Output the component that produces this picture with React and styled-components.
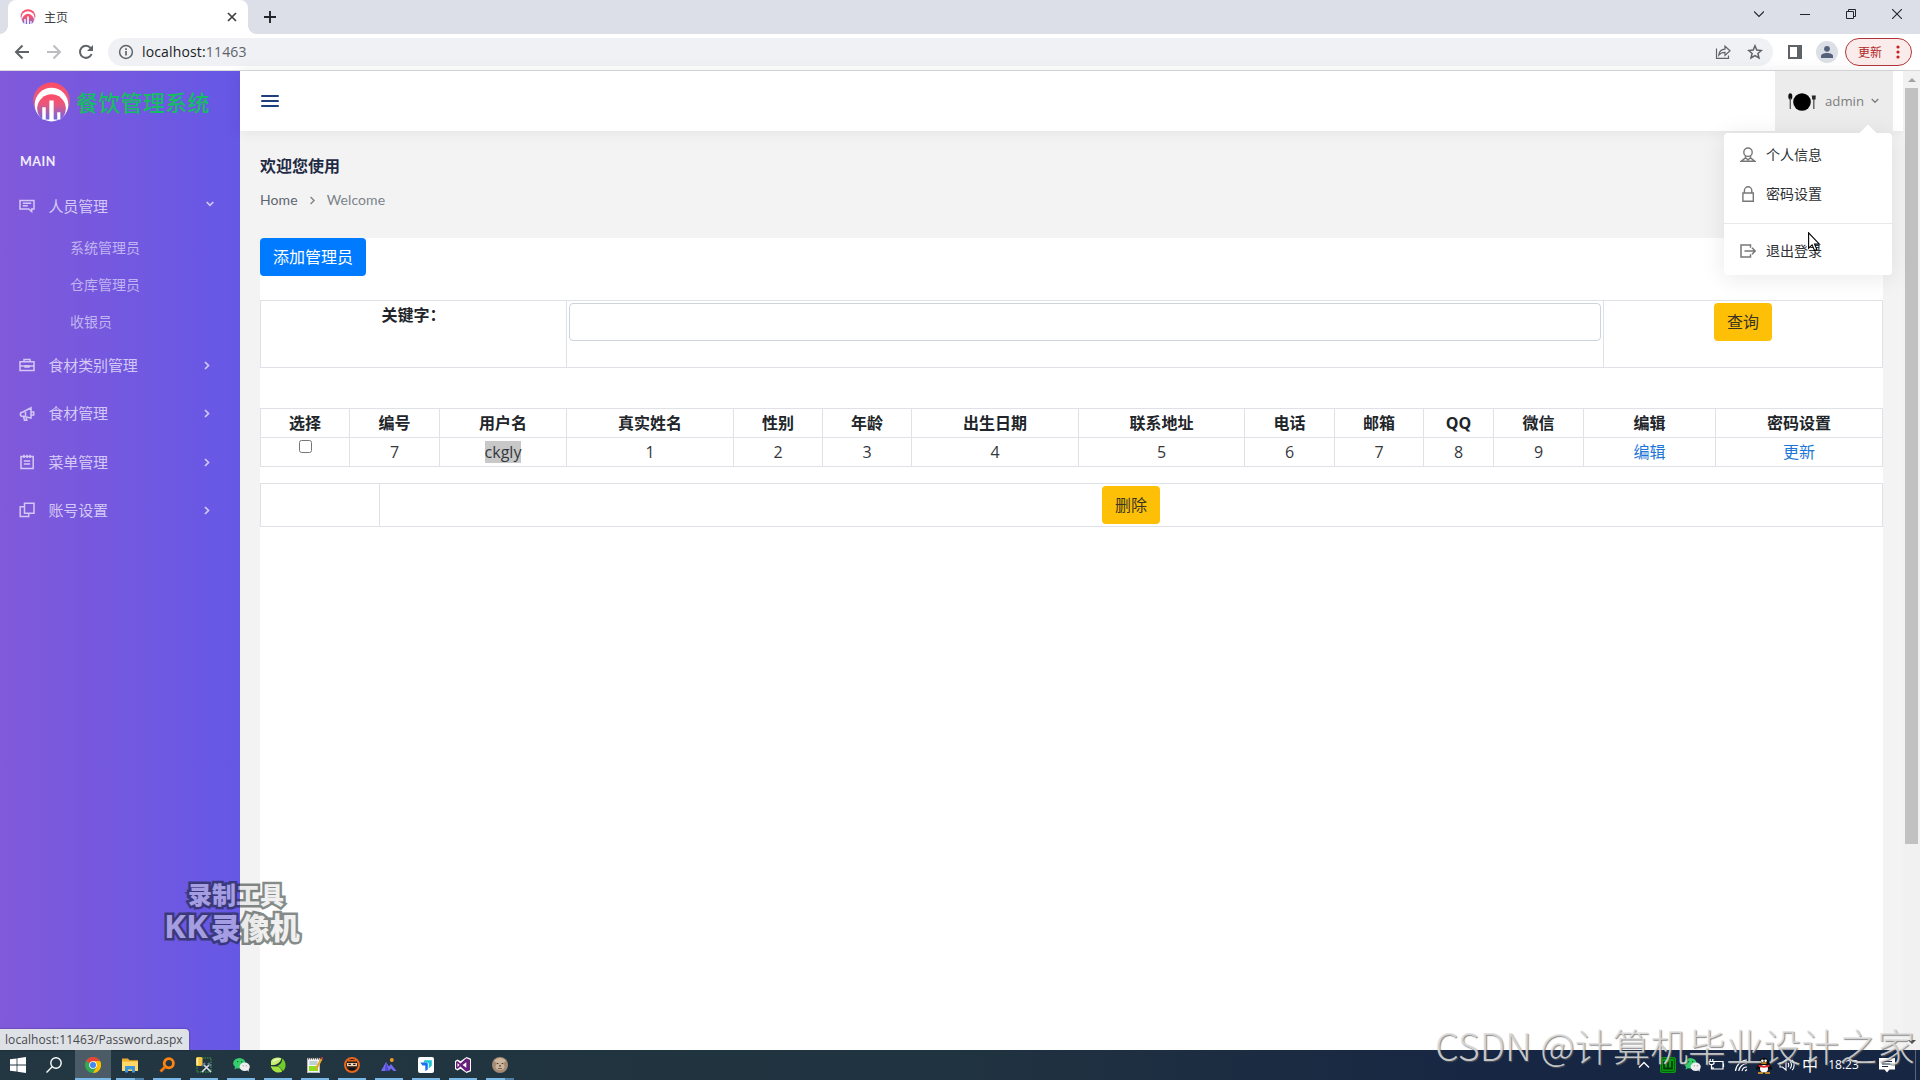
import React from 'react';
import styled, { createGlobalStyle, css } from 'styled-components';

const uiFont = '"Open Sans", "Noto Sans CJK SC", sans-serif';
const pageFont = 'Lato, "Noto Sans CJK SC", sans-serif';

const GlobalStyle = createGlobalStyle`
    * {
        box-sizing: border-box;
    }
    body {
        margin: 0;
        overflow: hidden;
        font-family: ${uiFont};
        color: #212529;
    }
    svg {
        display: block;
        flex: none;
    }
`;

const Screen = styled.div`
    position: relative;
    display: flex;
    flex-direction: column;
    width: 1920px;
    height: 1080px;
    overflow: hidden;
    background: #fff;
`;

/* ---------- browser window ---------- */

const TabStrip = styled.div`
    display: flex;
    height: 34px;
    padding-left: 8px;
    background: #dcdfe7;
`;
const Tab = styled.div`
    position: relative;
    display: flex;
    align-items: center;
    width: 240px;
    padding: 0 10px 0 12px;
    border-radius: 8px 8px 0 0;
    background: #fff;
    font-size: 12px;
    color: #3c4043;
    &::before,
    &::after {
        content: '';
        position: absolute;
        bottom: 0;
        width: 8px;
        height: 8px;
    }
    &::before {
        left: -8px;
        background: radial-gradient(circle at 0 0, transparent 7.5px, #fff 8px);
    }
    &::after {
        right: -8px;
        background: radial-gradient(circle at 100% 0, transparent 7.5px, #fff 8px);
    }
`;
const TabTitle = styled.span`
    flex: 1;
    margin: 0 0 1px 8px;
`;
const NewTab = styled.div`
    display: flex;
    align-items: center;
    margin-left: 16px;
`;
const WindowButtons = styled.div`
    display: flex;
    margin-left: auto;
`;
const WindowButton = styled.div`
    display: flex;
    justify-content: center;
    width: 46px;
    padding-top: 9px;
`;
const Toolbar = styled.div`
    display: flex;
    align-items: center;
    height: 37px;
    padding: 0 8px 1px 14px;
    border-bottom: 1px solid #d9dadd;
    background: #fff;
    color: #5f6368;
`;
const NavButtons = styled.div`
    display: flex;
    gap: 16px;
    margin-right: 14px;
`;
const Omnibox = styled.div`
    display: flex;
    align-items: center;
    width: 1665px;
    height: 28px;
    padding: 0 10px 0 10px;
    border-radius: 14px;
    background: #eff1f5;
`;
const Address = styled.span`
    flex: 1;
    margin-left: 8px;
    font-size: 14px;
    letter-spacing: 0.15px;
    color: #5f6368;
    b {
        font-weight: normal;
        color: #202124;
    }
`;
const OmniActions = styled.div`
    display: flex;
    gap: 16px;
`;
const PanelIcon = styled.div`
    width: 14px;
    height: 14px;
    margin: 0 14px 0 15px;
    border: 2px solid #5f6368;
    border-right-width: 5px;
`;
const Avatar = styled.div`
    display: flex;
    justify-content: center;
    align-items: center;
    width: 22px;
    height: 22px;
    margin-right: 7px;
    border-radius: 50%;
    background: #dcdfe6;
`;
const UpdatePill = styled.div`
    display: flex;
    align-items: center;
    justify-content: space-between;
    width: 67px;
    height: 28px;
    padding: 0 11px 0 12px;
    border: 1px solid #b3353b;
    border-radius: 14px;
    background: #fbecec;
    font-size: 12px;
    color: #b3261e;
`;

const Viewport = styled.div`
    position: relative;
    display: flex;
    height: 979px;
`;
const ScrollTrack = styled.div`
    display: flex;
    flex-direction: column;
    align-items: center;
    width: 17px;
    background: #f1f1f1;
`;
const ScrollArrow = styled.div`
    display: flex;
    align-items: center;
    justify-content: center;
    height: 17px;
    color: ${(p) => (p.$active ? '#505050' : '#a3a3a3')};
`;
const ScrollThumb = styled.div`
    width: 13px;
    height: 756px;
    margin-bottom: auto;
    background: #c1c1c1;
`;
const StatusBubble = styled.div`
    position: absolute;
    left: 0;
    bottom: 0;
    width: 189px;
    height: 21px;
    padding-left: 5px;
    border-top-right-radius: 4px;
    background: #dee1e6;
    box-shadow: 0 0 2px rgba(0, 0, 0, 0.45);
    font-size: 12px;
    line-height: 21px;
    letter-spacing: 0.08px;
    color: #47494d;
    white-space: nowrap;
`;

/* ---------- sidebar ---------- */

const Sidebar = styled.aside`
    width: 240px;
    background: linear-gradient(to right, #8159d9, #6558e6);
    font-family: ${pageFont};
`;
const Brand = styled.div`
    display: flex;
    align-items: center;
    height: 60px;
    padding: 2px 0 0 33px;
`;
const BrandName = styled.span`
    margin: 2px 0 0 6px;
    font-size: 22px;
    font-weight: 500;
    line-height: 30px;
    letter-spacing: 0.3px;
    color: #14bd63;
`;
const MenuTitle = styled.div`
    height: 51px;
    padding: 22px 0 0 20px;
    font-size: 12.5px;
    font-weight: bold;
    line-height: 18px;
    letter-spacing: 0.5px;
    color: #f1ecfc;
`;
const MenuItem = styled.div`
    display: flex;
    align-items: center;
    height: 48.3px;
    padding: 0 30px 0 19px;
    color: #d3c8f5;
    font-size: 15px;
`;
const MenuLabel = styled.span`
    flex: 1;
    margin-left: 13.5px;
    padding-bottom: 2px;
    letter-spacing: -0.15px;
`;
const SubItem = styled.div`
    height: 37px;
    padding-left: 70px;
    font-size: 14px;
    line-height: 35px;
    color: #c1b4f1;
`;

/* ---------- page ---------- */

const Main = styled.main`
    display: flex;
    flex-direction: column;
    flex: 1;
    background: #f3f3f3;
`;
const Topbar = styled.header`
    display: flex;
    justify-content: space-between;
    height: 60px;
    padding: 0 10px 0 21px;
    background: #fff;
    box-shadow: 0 0 14px rgba(0, 0, 0, 0.08);
`;
const Burger = styled.div`
    display: flex;
    flex-direction: column;
    justify-content: space-between;
    width: 18px;
    height: 12px;
    margin-top: 24px;
    i {
        height: 2px;
        border-radius: 1px;
        background: #1d3f80;
    }
`;
const UserButton = styled.div`
    display: flex;
    align-items: center;
    width: 118px;
    height: 61px;
    padding: 0 0 1px 13px;
    background: #ececec;
    color: #7d7d7d;
`;
const UserName = styled.span`
    margin: 0 7px 0 9px;
    padding-bottom: 1px;
    font-family: "Open Sans", sans-serif;
    font-size: 13.2px;
`;
const PageHead = styled.div`
    height: 107px;
    padding: 23px 0 0 20px;
    font-family: ${pageFont};
`;
const PageTitle = styled.h4`
    margin: 0;
    font-size: 16px;
    line-height: 23px;
    color: #1f2a44;
`;
const Breadcrumb = styled.div`
    display: flex;
    align-items: center;
    gap: 12px;
    margin-top: 13px;
    font-size: 14px;
    line-height: 20px;
    letter-spacing: 0.1px;
    color: #7b838b;
    span:first-child {
        color: #5d6570;
    }
`;
const Content = styled.section`
    flex: 1;
    width: 1623px;
    margin-left: 20px;
    background: #fff;
    font-size: 16px;
`;
const Button = styled.button`
    display: block;
    height: 38px;
    padding: 0 13px;
    border: 0;
    border-radius: 4px;
    font-family: ${uiFont};
    font-size: 16px;
    line-height: 38px;
    ${(p) =>
        p.$primary
            ? css`
                  background: #007bff;
                  color: #fff;
              `
            : css`
                  margin: 0 auto;
                  background: #fdc007;
                  color: #3a3424;
              `}
`;
const Table = styled.table`
    width: 1623px;
    margin-top: ${(p) => p.$top}px;
    table-layout: fixed;
    border-collapse: collapse;
    th,
    td {
        height: ${(p) => p.$row}px;
        padding: 0;
        border: 1px solid #dee2e6;
        text-align: center;
        line-height: 24px;
        vertical-align: ${(p) => (p.$alignTop ? 'top' : 'middle')};
    }
    td {
        color: #34383c;
    }
    a {
        color: #1c76d8;
    }
`;
const SearchLabel = styled.div`
    padding-top: 2px;
    font-weight: bold;
    color: #212529;
`;
const CellPad = styled.div`
    padding: 2px;
`;
const Input = styled.input`
    display: block;
    width: 100%;
    height: 38px;
    border: 1px solid #ced4da;
    border-radius: 4px;
`;
const Checkbox = styled.input`
    display: block;
    width: 13px;
    height: 13px;
    margin: 0 auto 12px;
`;
const Selected = styled.span`
    background: #c8c8c8;
`;

const Dropdown = styled.div`
    position: absolute;
    top: 62px;
    left: 1724px;
    width: 168px;
    height: 142px;
    padding-top: 2px;
    border-radius: 4px;
    background: #fff;
    box-shadow: 0 3px 24px rgba(0, 0, 0, 0.09);
    &::before {
        content: '';
        position: absolute;
        top: -6px;
        left: 138px;
        width: 12px;
        height: 12px;
        background: #fff;
        transform: rotate(45deg);
    }
`;
const DropdownItem = styled.div`
    position: relative;
    display: flex;
    align-items: center;
    gap: 10px;
    height: 39px;
    padding-left: 16px;
    font-size: 14px;
    color: #2c2f33;
    svg {
        color: #777;
    }
`;
const DropdownLabel = styled.span`
    padding-bottom: 2px;
`;
const Divider = styled.div`
    height: 1px;
    margin: 10px 0 7px;
    background: #e6e8ec;
`;
const Pointer = styled.div`
    position: absolute;
    left: 1808px;
    top: 232px;
`;

/* ---------- taskbar ---------- */

const Taskbar = styled.div`
    display: flex;
    height: 30px;
    background: linear-gradient(to right, #223741, #203340 50%, #172643 78%, #172643);
`;
const TaskSlot = styled.div`
    display: flex;
    align-items: center;
    justify-content: center;
    width: 36px;
`;
const TaskApp = styled(TaskSlot)`
    position: relative;
    margin-right: 1px;
    margin-left: ${(p) => (p.$active ? '3px' : 0)};
    background: ${(p) => (p.$active ? '#4c5c66' : 'none')};
    &::after {
        content: '';
        position: absolute;
        bottom: 0;
        left: ${(p) => (p.$active ? 0 : 4)}px;
        right: ${(p) => (p.$active ? 0 : 4)}px;
        height: 2px;
        background: ${(p) => (p.$stacked ? 'linear-gradient(to right, #7ab8e8 19px, #4f81a8 19px)' : '#7ab8e8')};
    }
`;
const Tray = styled.div`
    display: flex;
    align-items: center;
    margin-left: auto;
    margin-right: 4px;
    padding-right: 7px;
    border-right: 1px solid #5a6680;
    color: #fff;
`;
const TraySlot = styled.div`
    display: flex;
    align-items: center;
    justify-content: center;
    width: ${(p) => p.$w || 24}px;
    font-size: ${(p) => p.$size || 12}px;
    line-height: 20px;
    white-space: nowrap;
`;

/* ---------- watermarks ---------- */

const RecorderMark = styled.div`
    position: absolute;
    left: 162px;
    top: 878px;
    width: 148px;
    opacity: 0.5;
    font-family: "Noto Sans CJK SC", sans-serif;
    font-weight: 900;
    color: #e2e2e2;
    text-align: center;
    white-space: nowrap;
    -webkit-text-stroke: 5px #0c1a14;
    paint-order: stroke fill;
`;
const RecorderSmall = styled.div`
    font-size: 24px;
    line-height: 32px;
`;
const RecorderBig = styled.div`
    display: flex;
    align-items: center;
    height: 32px;
    margin-left: 2px;
    font-size: 30px;
    line-height: 32px;
    letter-spacing: -0.6px;
`;
const RecorderLatin = styled.span`
    margin-right: 3px;
    font-family: "Open Sans", sans-serif;
    font-size: 33px;
    font-weight: 700;
    letter-spacing: 0;
`;
const CornerMark = styled.div`
    position: absolute;
    left: 1435px;
    top: 1017px;
    font-family: "Noto Sans CJK SC", sans-serif;
    font-size: 37.8px;
    font-weight: 300;
    line-height: 56px;
    color: rgba(222, 222, 222, 0.85);
    text-shadow: 1px 1px 1px rgba(100, 100, 100, 0.75);
    white-space: nowrap;
`;

/* ---------- icons ---------- */

const Icon = ({ size = 16, w, h, box = '0 0 16 16', sw = 1.5, children }) => (
    <svg
        width={w || size}
        height={h || size}
        viewBox={box}
        fill="none"
        stroke="currentColor"
        strokeWidth={sw}
    >
        {children}
    </svg>
);

const Logo = ({ size, h = size, id }) => (
    <svg width={size} height={h} viewBox="0 0 36 39">
        <defs>
            <linearGradient id={id} x1="0" y1="0" x2="0" y2="1">
                <stop offset="0" stopColor="#ff4d64" />
                <stop offset="0.4" stopColor="#e9577c" />
                <stop offset="1" stopColor="#6e67e8" />
            </linearGradient>
        </defs>
        <circle cx="18" cy="18.5" r="18" fill={`url(#${id})`} />
        <circle cx="18" cy="22" r="16.4" fill="#fff" />
        <path d="M6.5 34A14 14 0 1 1 29.5 34L26 36.5H10Z" fill={`url(#${id})`} />
        <path d="M9 24.5h3.4v12H9ZM15.9 18h4.2v20H15.9ZM23.6 29.5h3v7h-3Z" fill="#fff" />
    </svg>
);

const PlateIcon = () => (
    <svg width="28" height="20" viewBox="0 0 28 20">
        <circle cx="14" cy="11" r="8.8" fill="#000" />
        <ellipse cx="2.3" cy="5.5" rx="2" ry="3.2" fill="#111" />
        <path d="M2.3 7v11M25.8 8v10" stroke="#555" strokeWidth="1.3" />
        <path d="M23.8 5h4M24.7 5v3h2.3V5" stroke="#222" strokeWidth="1.2" fill="#333" />
    </svg>
);

const ChevronRight = () => (
    <Icon w={6} h={9} box="0 0 6 9" sw={1.7}>
        <path d="M1 1l3.5 3.5L1 8" />
    </Icon>
);
const ChevronDown = ({ sw = 1.7 }) => (
    <Icon w={8} h={6} box="0 0 8 6" sw={sw}>
        <path d="M0.7 1L4 4.3 7.3 1" />
    </Icon>
);
const MenuArrowOpen = styled.div`
    margin: 0 -4px 4px 0;
`;

const menuIcons = {
    message: <path d="M1 2.4h14v8.6h-2.3v2.6L9.8 11H1ZM3.8 5.2h8.4M3.8 7.8h5" />,
    briefcase: <path d="M1 4.8h14v8.7H1ZM5 4.8V2.5h6v2.3M1 9h5M10 9h5M6 8.7h4v1.2H6Z" />,
    horn: <path d="M4 6L12 1.8V12L4 10.3C.5 11 .5 6 4 6ZM12 6h2.7v3H12M4.5 10.5l1 3.7h2.3L7 11M6.5 6v4" />,
    notepad: <path d="M2 2.4h12.2v12H2ZM5 .8v3.2M8 .8v3.2M11 .8v3.2M4.8 7h6.4M4.8 10h6.4" />,
    copy: <path d="M5.5 1.2H15V11.3H5.5ZM5.5 4.8H1.2v9.6h8.5v-3" />,
};

const WeChat = () => (
    <svg width="17" height="16" viewBox="0 0 17 16">
        <path d="M2 10l-.5 2.4L4.6 11Z" fill="#35cf6f" />
        <ellipse cx="6.4" cy="6.2" rx="6.2" ry="5.3" fill="#35cf6f" />
        <ellipse cx="11.7" cy="9.8" rx="5.1" ry="4.3" fill="#eee" />
        <path d="M14 13l1.8 1.8-.2-3Z" fill="#eee" />
        <path d="M4 4.6h1.2M8 4.6h1.2" stroke="#14632f" strokeWidth="1.2" />
        <path d="M9.8 8.8h1M12.8 8.8h1" stroke="#888" />
    </svg>
);

const taskIcons = {
    chrome: (
        <>
            <circle cx="8" cy="8" r="8" fill="#34a853" />
            <path d="M8 8L1.1 4A8 8 0 0 1 15 4Z" fill="#ea4335" />
            <path d="M8 8V4h7A8 8 0 0 1 8 16l3.5-6Z" fill="#fbbc05" />
            <circle cx="8" cy="8" r="3.8" fill="#fff" />
            <circle cx="8" cy="8" r="3" fill="#4285f4" />
        </>
    ),
    folder: (
        <>
            <path d="M0 1.5h6l1.5 1.7H16V14H0Z" fill="#f0ac2a" />
            <path d="M0 4.5h16V14H0Z" fill="#ffd867" />
            <path d="M3 15.5V9h10v6.5h-3v-3H6v3Z" fill="#3a96dd" />
        </>
    ),
    finder: (
        <>
            <circle cx="9.8" cy="6.2" r="4.6" fill="none" stroke="#ff8412" strokeWidth="2.8" />
            <path d="M6.3 9.8L1.5 14.5" stroke="#f47a0c" strokeWidth="2.8" />
        </>
    ),
    database: (
        <>
            <rect x="1" y="1" width="14" height="14" fill="none" stroke="#3fa83f" strokeDasharray="1.5 1" />
            <rect x="0" y="0" width="6.5" height="9" rx="1.5" fill="#f5c542" />
            <path d="M1.5 1v7" stroke="#fff3b8" strokeWidth="1.5" />
            <path d="M6 15l8-8M15 15L7 7" stroke="#d5dde6" strokeWidth="1.7" />
            <path d="M6 9l3-3M12 6l3 3" stroke="#63788d" strokeWidth="2" />
        </>
    ),
    leaf: (
        <>
            <path d="M1 4C3 .5 8 0 11.5 1.2 10.5 6 6 8.5 1 8Z" fill="#c5ee6b" />
            <path d="M12.5 1.5C16.5 5 16.5 11 13 14L10 10.5 7.5 9C11 7 12 5 12.5 1.5Z" fill="#6fce28" />
            <path d="M.8 9c3 .6 5 .6 7 .4 2.5 1.2 4 3 4.3 5.4C7.500 17 2 14.500.8 9Z" fill="#a2e33f" />
            <path d="M3 4.5C5 2.500 7.500 2 9.500 2" stroke="#effbd0" strokeWidth="1.4" fill="none" />
        </>
    ),
    notepad: (
        <>
            <rect x="0.5" y="1.5" width="12" height="14" fill="#f5f5f5" stroke="#bbb" />
            <path d="M1 1.5h11" stroke="#555" strokeWidth="2" strokeDasharray="1 1" />
            <path d="M2.5 5h8M2.5 7h8" stroke="#8aa" />
            <rect x="2" y="9" width="9" height="5" fill="#8fdd1d" />
            <path d="M14.5 2L9 12" stroke="#e7a62e" strokeWidth="2.2" />
            <path d="M14 .5l2 1.2" stroke="#c33" strokeWidth="2" />
        </>
    ),
    ninja: (
        <>
            <circle cx="8" cy="8" r="7" fill="#282019" stroke="#e8651c" strokeWidth="2" />
            <path d="M3 6h10v3.2H3Z" fill="#f5d4b4" />
            <path d="M4.5 7.4h2.3M9.2 7.4h2.3M5 12h6" stroke="#111" strokeWidth="1.3" />
            <path d="M4 3.800h8" stroke="#e8651c" strokeWidth="1.4" />
        </>
    ),
    peaks: (
        <>
            <path d="M0 14L5 5l3 4.5L10 7l5.5 7h-3L10 11.5 8 14Z" fill="#7569ee" />
            <path d="M5 5l3 9H4Z" fill="#5149d2" />
            <circle cx="10.8" cy="3" r="2" fill="#f29a22" />
        </>
    ),
    todesk: (
        <>
            <rect width="16" height="16" rx="2" fill="#fff" />
            <path d="M6.5 3.200h7.300v5.300l-3 3V6.500L9.800 5.500H5.500Z" fill="#18c5d6" />
            <path d="M2.300 5.600h6.500l1 1v6L7.300 14V8.500H4.500Z" fill="#1b6ff2" />
        </>
    ),
    studio: (
        <>
            <path d="M11.500 0L16 1.800v12.400L11.500 16 5.500 11.800 2.500 13.500 0 12V4l2.500-1.500 3 1.700Z" fill="#fff" />
            <path d="M11.2 1.2L15 2.8v10.4l-3.8 1.6L5.5 9.6 2.5 12 1 11.2V4.8L2.5 4l3 2.4ZM11.3 5.2L7.6 8l3.7 2.8ZM2.5 6v4l2-2Z" fill="#68217a" fillRule="evenodd" />
        </>
    ),
    dog: (
        <>
            <circle cx="8" cy="8" r="8" fill="#a58b73" />
            <path d="M2 4C5 0 11 0 14 4l-3 2H5Z" fill="#cdb69d" />
            <ellipse cx="8" cy="9.5" rx="4.500" ry="3.5" fill="#cbb49c" />
            <path d="M5 6.5h1.3M9.7 6.5H11M7.2 8.8h1.6" stroke="#49362a" strokeWidth="1.2" />
            <path d="M6 11.500h4" stroke="#7a6250" />
        </>
    ),
};

const TaskGlyph = ({ name }) =>
    name === 'wechat' ? (
        <WeChat />
    ) : (
        <svg width="16" height="16" viewBox="0 0 16 16">
            {taskIcons[name]}
        </svg>
    );

/* ---------- data ---------- */

const menu = [
    { icon: 'message', label: '人员管理', children: ['系统管理员', '仓库管理员', '收银员'] },
    { icon: 'briefcase', label: '食材类别管理' },
    { icon: 'horn', label: '食材管理' },
    { icon: 'notepad', label: '菜单管理' },
    { icon: 'copy', label: '账号设置' },
];

const columns = [
    ['选择', 89],
    ['编号', 90],
    ['用户名', 127],
    ['真实姓名', 167],
    ['性别', 89],
    ['年龄', 89],
    ['出生日期', 167],
    ['联系地址', 166],
    ['电话', 90],
    ['邮箱', 89],
    ['QQ', 70],
    ['微信', 90],
    ['编辑', 132],
    ['密码设置', 167],
];

const apps = ['chrome', 'folder', 'finder', 'database', 'wechat', 'leaf', 'notepad', 'ninja', 'peaks', 'todesk', 'studio', 'dog'];

/* ---------- sections ---------- */

const BrowserChrome = () => (
    <>
        <TabStrip>
            <Tab>
                <Logo size={16} id="favicon" />
                <TabTitle>主页</TabTitle>
                <Icon w={12} h={12} box="0 0 12 12" sw={1.7}>
                    <path d="M2 2l8 8M10 2l-8 8" />
                </Icon>
            </Tab>
            <NewTab>
                <Icon w={12} h={12} box="0 0 12 12" sw={1.9}>
                    <path d="M6 0v12M0 6h12" />
                </Icon>
            </NewTab>
            <WindowButtons>
                <WindowButton>
                    <Icon w={10} h={10} box="0 0 10 10" sw={1.1}>
                        <path d="M0 2.5l5 5 5-5" />
                    </Icon>
                </WindowButton>
                <WindowButton>
                    <Icon w={10} h={10} box="0 0 10 10" sw={1}>
                        <path d="M0 5.5h10" />
                    </Icon>
                </WindowButton>
                <WindowButton>
                    <Icon w={10} h={10} box="0 0 10 10" sw={1}>
                        <path d="M.5 2.5h7v7h-7ZM2.5 2.5v-2h7v7h-2" />
                    </Icon>
                </WindowButton>
                <WindowButton>
                    <Icon w={10} h={10} box="0 0 10 10" sw={1.1}>
                        <path d="M0 0l10 10M10 0L0 10" />
                    </Icon>
                </WindowButton>
            </WindowButtons>
        </TabStrip>
        <Toolbar>
            <NavButtons>
                <Icon sw={2}>
                    <path d="M15 8H2M8.5 1.5L2 8l6.5 6.5" />
                </Icon>
                <Icon sw={2}>
                    <path d="M1 8h13M7.5 1.5L14 8l-6.5 6.5" stroke="#bbbdc0" />
                </Icon>
                <Icon sw={2}>
                    <path d="M13.6 10A6 6 0 1 1 12.6 4" />
                    <path d="M15 1v6H9Z" fill="currentColor" stroke="none" />
                </Icon>
            </NavButtons>
            <Omnibox>
                <Icon sw={1.5}>
                    <circle cx="8" cy="8" r="6.4" />
                    <path d="M8 7v4.5M8 4.3v1.6" strokeWidth="1.7" />
                </Icon>
                <Address>
                    <b>localhost:</b>11463
                </Address>
                <OmniActions>
                    <Icon sw={1.2}>
                        <path d="M1.5 4.5v9.9h12v-2.8M3.8 11C4.3 7.2 6.5 5.3 10 5.2V2.2l5 4.6-5 4.6V8.3c-3 0-4.7.9-6.2 2.7Z" />
                    </Icon>
                    <Icon sw={1.5}>
                        <path d="M8 1.8l1.8 4.3 4.6.4-3.5 3 1.1 4.5L8 11.6 4 14l1.1-4.5-3.5-3 4.6-.4Z" />
                    </Icon>
                </OmniActions>
            </Omnibox>
            <PanelIcon />
            <Avatar>
                <svg width="14" height="14" viewBox="0 0 14 14" fill="#55607a">
                    <circle cx="7" cy="3.8" r="2.9" />
                    <path d="M1 13v-2c0-2 3-3 6-3s6 1 6 3v2Z" />
                </svg>
            </Avatar>
            <UpdatePill>
                更新
                <svg width="4" height="14" viewBox="0 0 4 14" fill="#c5221f">
                    <circle cx="2" cy="2" r="1.6" />
                    <circle cx="2" cy="7" r="1.6" />
                    <circle cx="2" cy="12" r="1.6" />
                </svg>
            </UpdatePill>
        </Toolbar>
    </>
);

const SideNav = () => (
    <Sidebar>
        <Brand>
            <Logo size={37} h={40} id="brand" />
            <BrandName>餐饮管理系统</BrandName>
        </Brand>
        <MenuTitle>MAIN</MenuTitle>
        {menu.map((item) => (
            <React.Fragment key={item.label}>
                <MenuItem>
                    <Icon>{menuIcons[item.icon]}</Icon>
                    <MenuLabel>{item.label}</MenuLabel>
                    {item.children ? (
                        <MenuArrowOpen>
                            <ChevronDown />
                        </MenuArrowOpen>
                    ) : (
                        <ChevronRight />
                    )}
                </MenuItem>
                {item.children && item.children.map((name) => <SubItem key={name}>{name}</SubItem>)}
            </React.Fragment>
        ))}
    </Sidebar>
);

const AdminTable = () => (
    <Table $top={40} $row={29}>
        <colgroup>
            {columns.map(([name, width]) => (
                <col key={name} width={width} />
            ))}
        </colgroup>
        <thead>
            <tr>
                {columns.map(([name]) => (
                    <th key={name}>{name}</th>
                ))}
            </tr>
        </thead>
        <tbody>
            <tr>
                <td>
                    <Checkbox type="checkbox" />
                </td>
                <td>7</td>
                <td>
                    <Selected>ckgly</Selected>
                </td>
                {[1, 2, 3, 4, 5, 6, 7, 8, 9].map((n) => (
                    <td key={n}>{n}</td>
                ))}
                <td>
                    <a>编辑</a>
                </td>
                <td>
                    <a>更新</a>
                </td>
            </tr>
        </tbody>
    </Table>
);

const UserMenu = () => (
    <Dropdown>
        <DropdownItem>
            <Icon sw={1.4}>
                <circle cx="8" cy="5.2" r="4.2" />
                <path d="M5.5 9v1.8L1.2 14.3h13.6L10.5 10.8V9M5.5 10.8L8 12.8l2.5-2" />
            </Icon>
            <DropdownLabel>个人信息</DropdownLabel>
        </DropdownItem>
        <DropdownItem>
            <Icon sw={1.4}>
                <path d="M2.9 7h10.4v8.2H2.9ZM4.4 7V4.5a3.7 3.7 0 0 1 7.4 0V7" />
            </Icon>
            <DropdownLabel>密码设置</DropdownLabel>
        </DropdownItem>
        <Divider />
        <DropdownItem>
            <Icon sw={1.5}>
                <path d="M10.5 4.8V2H1v12h9.5v-2.8M4.5 8H15M12 4.8L15.2 8 12 11.2" />
            </Icon>
            <DropdownLabel>退出登录</DropdownLabel>
        </DropdownItem>
    </Dropdown>
);

const WindowsTaskbar = () => (
    <Taskbar>
        <TaskSlot>
            <svg width="16" height="16" viewBox="0 0 16 16" fill="#fff">
                <path d="M0 2.3l6.6-.9v6.2H0ZM7.4 1.2L16 0v7.6H7.4ZM0 8.4h6.6v6.2L0 13.7ZM7.4 8.4H16V16l-8.6-1.2Z" />
            </svg>
        </TaskSlot>
        <TaskSlot>
            <svg width="16" height="16" viewBox="0 0 16 16" fill="none" stroke="#fff" strokeWidth="1.4">
                <circle cx="10" cy="6" r="5.2" />
                <path d="M6.2 9.8L.5 15.5" />
            </svg>
        </TaskSlot>
        {apps.map((name) => (
            <TaskApp key={name} $active={name === 'chrome'} $stacked={name === 'folder' || name === 'dog'}>
                <TaskGlyph name={name} />
            </TaskApp>
        ))}
        <Tray>
            <TraySlot>
                <Icon w={12} h={8} box="0 0 12 8" sw={1.4}>
                    <path d="M1 6.5l5-5 5 5" />
                </Icon>
            </TraySlot>
            <TraySlot>
                <svg width="16" height="16" viewBox="0 0 16 16">
                    <rect width="16" height="16" rx="2.5" fill="#0b9a14" />
                    <rect x="1.5" y="1.5" width="13" height="13" rx="1.5" fill="none" stroke="#05620b" />
                    <path d="M4 4v7.5h8V4M8 5v6" fill="none" stroke="#033d07" strokeWidth="1.8" />
                </svg>
            </TraySlot>
            <TraySlot>
                <WeChat />
            </TraySlot>
            <TraySlot>
                <Icon w={17} h={14} box="0 0 17 14" sw={1.2}>
                    <path d="M5 3.5h10v7.5H5v-2M15.5 5.5v3.5M1 3.5h5v1.5c0 2-5 2-5 0ZM2.2 3.5V1M4.8 3.5V1M3.5 6.5V11H5" />
                </Icon>
            </TraySlot>
            <TraySlot $w={25}>
                <Icon w={14} h={14} box="0 0 14 14" sw={1.2}>
                    <path d="M1.5 13A12 12 0 0 1 13 2M4.7 13A8.6 8.6 0 0 1 13 5.5M8 13a5 5 0 0 1 5-4M11 13l2-1.5" />
                </Icon>
            </TraySlot>
            <TraySlot $w={22}>
                <svg width="16" height="17" viewBox="0 0 16 17">
                    <ellipse cx="8" cy="8.5" rx="6" ry="7.7" fill="#0b0b0b" />
                    <path d="M2.5 9L.5 12.5M13.5 9l2 3.5" stroke="#0b0b0b" strokeWidth="2" />
                    <ellipse cx="8" cy="11.7" rx="4" ry="3.8" fill="#fff" />
                    <circle cx="6.4" cy="3.8" r="1.3" fill="#fff" />
                    <circle cx="9.6" cy="3.8" r="1.3" fill="#fff" />
                    <path d="M2.5 7.6c3 1.7 8 1.7 11 0v2c-3 1.4-8 1.4-11 0Z" fill="#e3242b" />
                    <path d="M5.5 6h5M2 16h5M9 16h5" stroke="#f6a821" strokeWidth="1.5" />
                </svg>
            </TraySlot>
            <TraySlot>
                <Icon sw={1.1}>
                    <path d="M1 6v4h2.5L7 13V3L3.5 6ZM9 6c1 1 1 3 0 4M11 4.3c2 2 2 5.4 0 7.4M13.2 2.8c2.6 3 2.6 7.4 0 10.4" />
                </Icon>
            </TraySlot>
            <TraySlot $w={22} $size={16}>
                中
            </TraySlot>
            <TraySlot $w={45}>18:23</TraySlot>
            <TraySlot $w={42}>
                <svg width="16" height="16" viewBox="0 0 16 16">
                    <path d="M0 1h16v11.5h-5.5L8 15.5l-2.5-3H0Z" fill="#fff" />
                    <path d="M3 4.5h10M3 7h10M3 9.5h6" stroke="#172643" />
                </svg>
            </TraySlot>
        </Tray>
    </Taskbar>
);

const App = () => (
    <Screen>
        <GlobalStyle />
        <BrowserChrome />
        <Viewport>
            <SideNav />
            <Main>
                <Topbar>
                    <Burger>
                        <i />
                        <i />
                        <i />
                    </Burger>
                    <UserButton>
                        <PlateIcon />
                        <UserName>admin</UserName>
                        <ChevronDown sw={1.3} />
                    </UserButton>
                </Topbar>
                <PageHead>
                    <PageTitle>欢迎您使用</PageTitle>
                    <Breadcrumb>
                        <span>Home</span>
                        <Icon w={5} h={9} box="0 0 5 9" sw={1.4}>
                            <path d="M.6 1l3.5 3.5L.6 8" />
                        </Icon>
                        <span>Welcome</span>
                    </Breadcrumb>
                </PageHead>
                <Content>
                    <Button $primary>添加管理员</Button>
                    <Table $top={24} $row={67} $alignTop>
                        <colgroup>
                            <col width="306" />
                            <col width="1037" />
                            <col width="279" />
                        </colgroup>
                        <tbody>
                            <tr>
                                <td>
                                    <SearchLabel>关键字：</SearchLabel>
                                </td>
                                <td>
                                    <CellPad>
                                        <Input />
                                    </CellPad>
                                </td>
                                <td>
                                    <CellPad>
                                        <Button>查询</Button>
                                    </CellPad>
                                </td>
                            </tr>
                        </tbody>
                    </Table>
                    <AdminTable />
                    <Table $top={16} $row={43}>
                        <colgroup>
                            <col width="119" />
                            <col />
                        </colgroup>
                        <tbody>
                            <tr>
                                <td />
                                <td>
                                    <Button>删除</Button>
                                </td>
                            </tr>
                        </tbody>
                    </Table>
                </Content>
            </Main>
            <ScrollTrack>
                <ScrollArrow>
                    <svg width="8" height="4" viewBox="0 0 8 4">
                        <path d="M0 4l4-4 4 4Z" fill="currentColor" />
                    </svg>
                </ScrollArrow>
                <ScrollThumb />
                <ScrollArrow $active>
                    <svg width="8" height="4" viewBox="0 0 8 4">
                        <path d="M0 0l4 4 4-4Z" fill="currentColor" />
                    </svg>
                </ScrollArrow>
            </ScrollTrack>
            <UserMenu />
            <StatusBubble>localhost:11463/Password.aspx</StatusBubble>
        </Viewport>
        <WindowsTaskbar />
        <RecorderMark>
            <RecorderSmall>录制工具</RecorderSmall>
            <RecorderBig>
                <RecorderLatin>KK</RecorderLatin>
                录像机
            </RecorderBig>
        </RecorderMark>
        <CornerMark>CSDN @计算机毕业设计之家</CornerMark>
        <Pointer>
            <svg width="13" height="20" viewBox="0 0 13 20">
                <path d="M.6.8v15.4l3.5-3.3 2.4 5.6 2.4-1-2.4-5.4h4.9Z" fill="#fff" stroke="#000" strokeWidth="1.1" />
            </svg>
        </Pointer>
    </Screen>
);

export default App;
